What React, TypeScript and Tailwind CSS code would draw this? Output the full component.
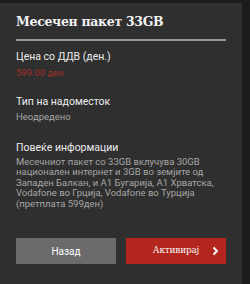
export default function App() {
  return (
    <div className="w-[250px] h-[284px] bg-[#1c1c1c] pt-[3px] pr-[8px]">
      <div className="h-full bg-[#2f2f2f] px-4 pt-[10px] font-['Roboto',sans-serif]">
        <h1 className="text-[12.5px] leading-[18px] font-bold tracking-tight text-[#f2f2f2] font-['DejaVu_Serif',serif]">
          Месечен пакет 33GB
        </h1>
        <div className="mt-[8px] h-[1.5px] bg-[#9a9a9a]" />

        <div className="mt-[9px]">
          <div className="text-[10.5px] leading-[14px] text-[#ededed]">Цена со ДДВ (ден.)</div>
          <div className="mt-[2px] text-[9.5px] leading-[13px] text-[#a3302a]">599.00 ден.</div>
        </div>

        <div className="mt-[16px]">
          <div className="text-[10.5px] leading-[14px] text-[#ededed]">Тип на надоместок</div>
          <div className="mt-[1px] text-[9.5px] leading-[13px] text-[#a6a6a6]">Неодредено</div>
        </div>

        <div className="mt-[18px]">
          <div className="text-[10.5px] leading-[14px] text-[#ededed]">Повеќе информации</div>
          <p className="mt-[2px] text-[9.5px] leading-[10.5px] text-[#a6a6a6]">
            Месечниот пакет со 33GB вклучува 30GB национален интернет и 3GB во земјите од Западен
            Балкан, и А1 Бугарија, А1 Хрватска, Vodafone во Грција, Vodafone во Турција (претплата
            599ден)
          </p>
        </div>

        <div className="mt-[29px] flex gap-[10px]">
          <button className="flex-1 h-[26px] bg-[#6b6b6b] text-[10px] text-white">Назад</button>
          <button className="flex-1 h-[26px] bg-[#b3261e] text-[#f4f4f4] relative font-['DejaVu_Serif',serif] tracking-tight text-[9px]">
            Активирај
            <svg
              className="absolute right-[7px] top-1/2 -translate-y-1/2"
              width="7"
              height="10"
              viewBox="0 0 7 10"
              fill="none"
            >
              <path d="M1.5 1.5 L5 5 L1.5 8.5" stroke="white" strokeWidth="2" />
            </svg>
          </button>
        </div>
      </div>
    </div>
  );
}
